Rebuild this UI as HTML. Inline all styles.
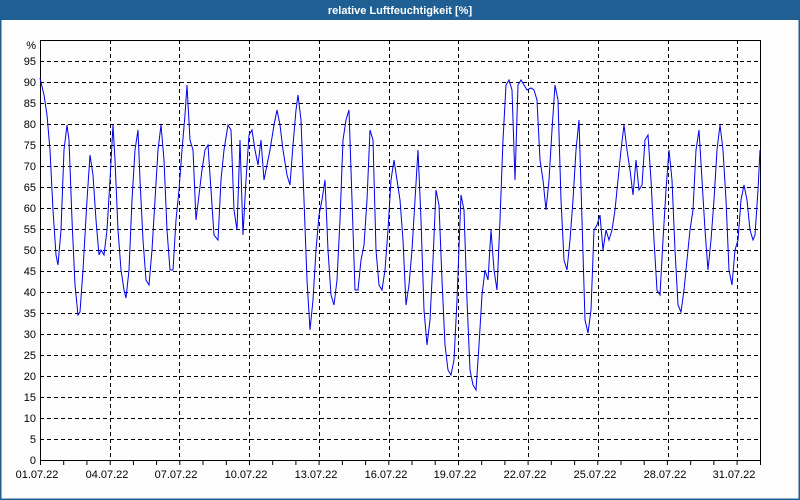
<!DOCTYPE html>
<html><head><meta charset="utf-8"><style>
html,body{margin:0;padding:0;background:#fff;}
svg{display:block;}
text{font-family:"Liberation Sans",sans-serif;font-size:11px;fill:#000;}
</style></head><body>
<svg width="800" height="500" xmlns="http://www.w3.org/2000/svg">
<rect x="0" y="0" width="800" height="500" fill="#fdfdfd"/>
<rect x="0.5" y="0.5" width="799" height="499" fill="none" stroke="#1f5f94" stroke-width="2"/>
<rect x="0" y="0" width="800" height="20" fill="#1f5f94"/>
<text x="400" y="14" text-anchor="middle" style="fill:#fff;font-weight:bold">relative Luftfeuchtigkeit [%]</text>
<g stroke="#000" stroke-dasharray="4,3" stroke-width="1">
<path d="M40 61.5H760M40 82.5H760M40 103.5H760M40 124.5H760M40 145.5H760M40 166.5H760M40 187.5H760M40 208.5H760M40 229.5H760M40 250.5H760M40 271.5H760M40 292.5H760M40 313.5H760M40 334.5H760M40 355.5H760M40 376.5H760M40 397.5H760M40 418.5H760M40 439.5H760"/>
<path d="M110.5 40V460M179.5 40V460M249.5 40V460M319.5 40V460M389.5 40V460M458.5 40V460M528.5 40V460M598.5 40V460M668.5 40V460M737.5 40V460"/>
</g>
<rect x="40.5" y="40.5" width="720" height="420" fill="none" stroke="#000"/>
<g stroke="#000"><path d="M40.5 461V465M63.7 461V465M86.9 461V465M110.2 461V465M133.4 461V465M156.6 461V465M179.8 461V465M203 461V465M226.3 461V465M249.5 461V465M272.7 461V465M295.9 461V465M319.1 461V465M342.4 461V465M365.6 461V465M388.8 461V465M412 461V465M435.2 461V465M458.5 461V465M481.7 461V465M504.9 461V465M528.1 461V465M551.3 461V465M574.6 461V465M597.8 461V465M621 461V465M644.2 461V465M667.4 461V465M690.7 461V465M713.9 461V465M737.1 461V465M760.5 461V465"/></g>
<g text-anchor="end">
<text x="36" y="49">%</text>
<text x="36" y="65">95</text><text x="36" y="86">90</text><text x="36" y="107">85</text><text x="36" y="128">80</text><text x="36" y="149">75</text><text x="36" y="170">70</text><text x="36" y="191">65</text><text x="36" y="212">60</text><text x="36" y="233">55</text><text x="36" y="254">50</text><text x="36" y="275">45</text><text x="36" y="296">40</text><text x="36" y="317">35</text><text x="36" y="338">30</text><text x="36" y="359">25</text><text x="36" y="380">20</text><text x="36" y="401">15</text><text x="36" y="422">10</text><text x="36" y="443">5</text><text x="36" y="464">0</text>
</g>
<g text-anchor="middle">
<text x="37" y="478">01.07.22</text><text x="107" y="478">04.07.22</text><text x="176" y="478">07.07.22</text><text x="246" y="478">10.07.22</text><text x="316" y="478">13.07.22</text><text x="386" y="478">16.07.22</text><text x="455" y="478">19.07.22</text><text x="525" y="478">22.07.22</text><text x="595" y="478">25.07.22</text><text x="665" y="478">28.07.22</text><text x="734" y="478">31.07.22</text>
</g>
<polyline fill="none" stroke="#0000ee" stroke-width="1" points="40,78 44,95 47,115 50,150 53,210 56,255 58,265 61,230 64,150 67,125 69,140 72,220 75,285 78,315 80,312 83,270 87,200 90,155 93,175 96,220 99,255 101,250 104,255 107,230 110,180 113,125 115,160 118,230 121,270 124,290 126,298 129,270 132,200 135,150 138,130 140,180 143,240 146,280 149,285 152,250 155,200 158,150 161,125 164,160 167,230 170,270 173,270 176,220 179,190 182,150 185,115 187,85 190,140 193,150 196,220 199,195 202,170 205,150 208,145 211,190 214,235 218,240 221,180 224,150 228,125 231,130 234,210 237,230 240,140 243,235 246,180 249,135 252,130 255,150 258,165 261,140 264,180 267,165 270,150 274,125 277,110 280,125 283,150 287,175 290,185 293,145 296,110 298,95 301,120 304,200 307,280 310,330 313,300 316,250 319,215 322,200 325,180 328,250 331,295 334,305 337,280 340,220 343,140 346,120 349,110 352,200 355,290 358,290 361,260 364,245 367,200 370,130 373,140 376,250 379,285 382,290 385,270 388,230 391,180 394,160 397,180 400,200 403,240 406,305 409,285 412,250 415,200 418,150 421,220 424,310 427,345 430,320 433,260 436,190 439,205 442,280 445,345 448,370 451,375 454,360 457,300 461,195 464,210 467,300 470,370 473,385 476,390 479,345 482,295 485,270 488,280 491,230 494,270 497,290 500,220 503,140 506,85 509,80 512,90 515,180 518,85 521,80 524,85 527,90 531,88 534,90 537,100 540,160 543,180 546,210 549,180 552,130 555,85 558,100 561,200 564,260 567,270 570,240 573,200 576,150 579,120 582,220 585,320 588,333 591,310 594,230 597,225 600,215 603,250 606,230 609,240 612,230 615,210 618,180 621,150 624,125 627,150 630,170 633,195 636,160 639,190 642,185 645,140 648,135 651,180 654,240 657,290 660,295 663,240 666,190 669,150 672,180 675,250 678,305 681,312 684,290 687,260 690,230 693,210 696,150 699,130 702,180 705,230 708,270 711,240 714,200 717,150 720,125 723,150 726,200 729,270 732,285 735,250 738,240 741,200 744,185 747,200 750,230 753,240 755,235 758,190 760,150"/>
</svg>
</body></html>
